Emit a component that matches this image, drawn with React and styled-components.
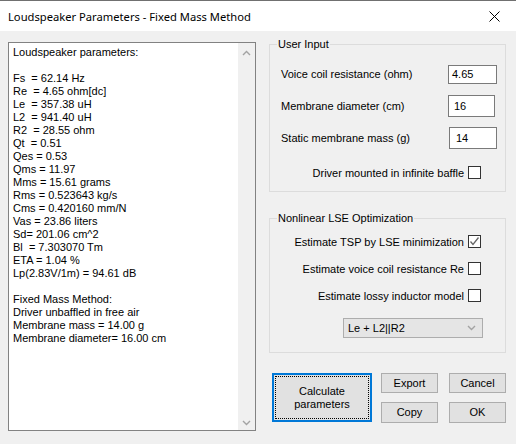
import React from "react";
import styled, { createGlobalStyle } from "styled-components";

const GlobalStyle = createGlobalStyle`
    html, body {
        margin: 0;
        padding: 0;
        background: #f0f0f0;
    }
    body {
        font-family: "Liberation Sans", Arial, sans-serif;
        font-size: 11px;
        color: #000;
    }
`;

const Window = styled.div`
    width: 516px;
    height: 444px;
    background: #f0f0f0;
    display: flex;
    flex-direction: column;
    overflow: hidden;
`;

const TitleBar = styled.div`
    height: 30px;
    border-top: 1px solid #707070;
    background: #fff;
    display: flex;
    align-items: center;
    justify-content: space-between;
    padding: 0 8px;
    font-family: "Noto Sans", "Open Sans", sans-serif;
    font-size: 11.2px;
`;

const CloseButton = styled.div`
    width: 24px;
    height: 24px;
    display: flex;
    align-items: center;
    justify-content: center;
    margin-right: 2px;
`;

const Body = styled.div`
    display: flex;
    padding: 11px 10px 0 8px;
    gap: 13px;
`;

const Memo = styled.div`
    width: 248px;
    height: 389px;
    box-sizing: border-box;
    border: 1px solid #828282;
    background: #fff;
    display: flex;
`;

const MemoText = styled.div`
    flex: 1;
    padding: 3px 0 0 4px;
    white-space: pre;
    line-height: 13px;
`;

const ScrollBar = styled.div`
    width: 17px;
    background: #f0f0f0;
    display: flex;
    flex-direction: column;
    justify-content: space-between;
    align-items: center;
    padding: 7px 0 4px;
`;

const RightColumn = styled.div`
    width: 237px;
    display: flex;
    flex-direction: column;
    margin-top: -4px;
`;

const Group = styled.fieldset`
    margin: ${(p) => p.$mt || 0}px 0 0;
    padding: ${(p) => p.$pad};
    border: 1px solid #dcdcdc;
    min-width: 0;
    display: flex;
    flex-direction: column;
    gap: ${(p) => p.$gap}px;
`;

const Legend = styled.legend`
    padding: 0 1px;
    margin-left: 7px;
    line-height: 13px;
`;

const FieldRow = styled.div`
    display: flex;
    align-items: center;
    justify-content: space-between;
    height: 22px;
    padding: 0 ${(p) => p.$right}px 0 11px;
`;

const TextInput = styled.div`
    width: ${(p) => p.$w}px;
    height: ${(p) => p.$h}px;
    box-sizing: border-box;
    border: 1px solid #7a7a7a;
    background: #fff;
    display: flex;
    align-items: center;
    padding-left: ${(p) => p.$pl}px;
`;

const CheckRow = styled.label`
    display: flex;
    align-items: center;
    justify-content: flex-end;
    gap: 4px;
    padding-right: 24px;
    height: 13px;
    margin-top: ${(p) => p.$mt || 0}px;
`;

const Box = styled.span`
    width: 13px;
    height: 13px;
    box-sizing: border-box;
    border: 1px solid #333;
    background: #fff;
    display: flex;
    align-items: center;
    justify-content: center;
`;

const Select = styled.div`
    align-self: flex-end;
    width: 140px;
    height: 20px;
    box-sizing: border-box;
    border: 1px solid #adadad;
    background: #e5e5e5;
    display: flex;
    align-items: center;
    justify-content: space-between;
    padding: 0 6px 0 4px;
    margin: 2px 22px 0 0;
`;

const Buttons = styled.div`
    display: flex;
    margin: 20px 0 0 3px;
    gap: 9px;
`;

const ButtonColumn = styled.div`
    display: flex;
    flex-direction: column;
    gap: 9px;
    margin-right: ${(p) => p.$mr || 0}px;
`;

const Button = styled.div`
    width: ${(p) => p.$w}px;
    height: ${(p) => p.$h}px;
    box-sizing: border-box;
    border: 1px solid #adadad;
    background: #e1e1e1;
    display: flex;
    align-items: center;
    justify-content: center;
    text-align: center;
    line-height: 13px;
`;

const DefaultButton = styled(Button)`
    border: 2px solid #0078d7;
    outline: 1px dotted #000;
    outline-offset: -4px;
`;

const Chevron = ({ up }) => (
    <svg width="9" height="6" viewBox="0 0 9 6">
        <polyline
            points={up ? "1,5 4.5,1.5 8,5" : "1,1 4.5,4.5 8,1"}
            fill="none"
            stroke="#a3a3a3"
            strokeWidth="1.4"
        />
    </svg>
);

const Check = ({ checked, mt, children }) => (
    <CheckRow $mt={mt}>
        {children}
        <Box>
            {checked && (
                <svg width="11" height="11" viewBox="0 0 11 11">
                    <polyline
                        points="1.5,5.5 4,8.5 9.5,1.5"
                        fill="none"
                        stroke="#666"
                        strokeWidth="1.3"
                    />
                </svg>
            )}
        </Box>
    </CheckRow>
);

const lines = [
    "Loudspeaker parameters:",
    "",
    "Fs  = 62.14 Hz",
    "Re  = 4.65 ohm[dc]",
    "Le  = 357.38 uH",
    "L2  = 941.40 uH",
    "R2  = 28.55 ohm",
    "Qt  = 0.51",
    "Qes = 0.53",
    "Qms = 11.97",
    "Mms = 15.61 grams",
    "Rms = 0.523643 kg/s",
    "Cms = 0.420160 mm/N",
    "Vas = 23.86 liters",
    "Sd= 201.06 cm^2",
    "Bl  = 7.303070 Tm",
    "ETA = 1.04 %",
    "Lp(2.83V/1m) = 94.61 dB",
    "",
    "Fixed Mass Method:",
    "Driver unbaffled in free air",
    "Membrane mass = 14.00 g",
    "Membrane diameter= 16.00 cm",
];

const App = () => (
    <Window>
        <GlobalStyle />
        <TitleBar>
            <span>Loudspeaker Parameters - Fixed Mass Method</span>
            <CloseButton>
                <svg width="11" height="11" viewBox="0 0 11 11">
                    <path d="M0.5 0.5 L10.5 10.5 M10.5 0.5 L0.5 10.5" stroke="#000" strokeWidth="1" />
                </svg>
            </CloseButton>
        </TitleBar>
        <Body>
            <Memo>
                <MemoText>{lines.join("\n")}</MemoText>
                <ScrollBar>
                    <Chevron up />
                    <Chevron />
                </ScrollBar>
            </Memo>
            <RightColumn>
                <Group $pad="12px 0 12px" $gap={10}>
                    <Legend>User Input</Legend>
                    <FieldRow $right={8}>
                        <span>Voice coil resistance (ohm)</span>
                        <TextInput $w={49} $h={19} $pl={3}>4.65</TextInput>
                    </FieldRow>
                    <FieldRow $right={10}>
                        <span>Membrane diameter (cm)</span>
                        <TextInput $w={47} $h={22} $pl={5}>16</TextInput>
                    </FieldRow>
                    <FieldRow $right={8}>
                        <span>Static membrane mass (g)</span>
                        <TextInput $w={48} $h={22} $pl={6}>14</TextInput>
                    </FieldRow>
                    <Check mt={7}>Driver mounted in infinite baffle</Check>
                </Group>
                <Group $pad="10px 0 14px" $gap={14} $mt={20}>
                    <Legend>Nonlinear LSE Optimization</Legend>
                    <Check checked>Estimate TSP by LSE minimization</Check>
                    <Check>Estimate voice coil resistance Re</Check>
                    <Check>Estimate lossy inductor model</Check>
                    <Select>
                        <span>Le + L2||R2</span>
                        <Chevron />
                    </Select>
                </Group>
                <Buttons>
                    <DefaultButton $w={100} $h={49}>
                        Calculate
                        <br />
                        parameters
                    </DefaultButton>
                    <ButtonColumn $mr={2}>
                        <Button $w={57} $h={20}>Export</Button>
                        <Button $w={57} $h={21}>Copy</Button>
                    </ButtonColumn>
                    <ButtonColumn>
                        <Button $w={57} $h={20}>Cancel</Button>
                        <Button $w={57} $h={21}>OK</Button>
                    </ButtonColumn>
                </Buttons>
            </RightColumn>
        </Body>
    </Window>
);

export default App;
